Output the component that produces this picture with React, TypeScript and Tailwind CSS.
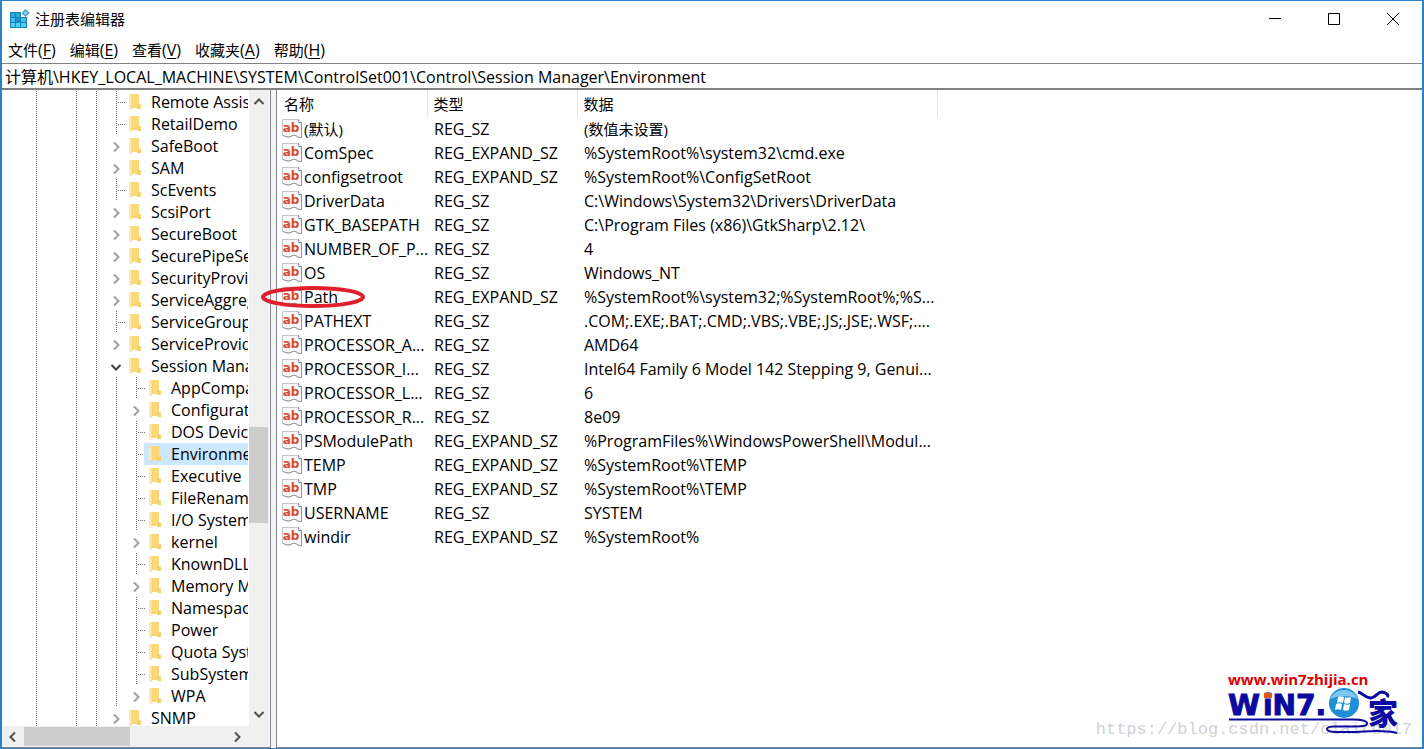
import React from "react";
import clsx from "clsx";

interface TreeNode {
  name: string;
  level: 1 | 2;
  state: "leaf" | "closed" | "open";
  selected?: boolean;
}

const TREE: TreeNode[] = [
  { name: "Remote Assistance", level: 1, state: "leaf" },
  { name: "RetailDemo", level: 1, state: "leaf" },
  { name: "SafeBoot", level: 1, state: "closed" },
  { name: "SAM", level: 1, state: "closed" },
  { name: "ScEvents", level: 1, state: "leaf" },
  { name: "ScsiPort", level: 1, state: "closed" },
  { name: "SecureBoot", level: 1, state: "closed" },
  { name: "SecurePipeServers", level: 1, state: "closed" },
  { name: "SecurityProviders", level: 1, state: "closed" },
  { name: "ServiceAggregatedEvents", level: 1, state: "closed" },
  { name: "ServiceGroupOrder", level: 1, state: "leaf" },
  { name: "ServiceProvider", level: 1, state: "closed" },
  { name: "Session Manager", level: 1, state: "open" },
  { name: "AppCompatCache", level: 2, state: "leaf" },
  { name: "Configuration Manager", level: 2, state: "closed" },
  { name: "DOS Devices", level: 2, state: "leaf" },
  { name: "Environment", level: 2, state: "leaf", selected: true },
  { name: "Executive", level: 2, state: "leaf" },
  { name: "FileRenameOperations", level: 2, state: "leaf" },
  { name: "I/O System", level: 2, state: "leaf" },
  { name: "kernel", level: 2, state: "closed" },
  { name: "KnownDLLs", level: 2, state: "leaf" },
  { name: "Memory Management", level: 2, state: "closed" },
  { name: "NamespaceSeparation", level: 2, state: "leaf" },
  { name: "Power", level: 2, state: "leaf" },
  { name: "Quota System", level: 2, state: "leaf" },
  { name: "SubSystems", level: 2, state: "leaf" },
  { name: "WPA", level: 2, state: "closed" },
  { name: "SNMP", level: 1, state: "closed" },
];

const VALUES = [
  ["(默认)", "REG_SZ", "(数值未设置)"],
  ["ComSpec", "REG_EXPAND_SZ", "%SystemRoot%\\system32\\cmd.exe"],
  ["configsetroot", "REG_EXPAND_SZ", "%SystemRoot%\\ConfigSetRoot"],
  ["DriverData", "REG_SZ", "C:\\Windows\\System32\\Drivers\\DriverData"],
  ["GTK_BASEPATH", "REG_SZ", "C:\\Program Files (x86)\\GtkSharp\\2.12\\"],
  ["NUMBER_OF_P...", "REG_SZ", "4"],
  ["OS", "REG_SZ", "Windows_NT"],
  ["Path", "REG_EXPAND_SZ", "%SystemRoot%\\system32;%SystemRoot%;%S..."],
  ["PATHEXT", "REG_SZ", ".COM;.EXE;.BAT;.CMD;.VBS;.VBE;.JS;.JSE;.WSF;...."],
  ["PROCESSOR_A...", "REG_SZ", "AMD64"],
  ["PROCESSOR_I...", "REG_SZ", "Intel64 Family 6 Model 142 Stepping 9, Genui..."],
  ["PROCESSOR_L...", "REG_SZ", "6"],
  ["PROCESSOR_R...", "REG_SZ", "8e09"],
  ["PSModulePath", "REG_EXPAND_SZ", "%ProgramFiles%\\WindowsPowerShell\\Modul..."],
  ["TEMP", "REG_EXPAND_SZ", "%SystemRoot%\\TEMP"],
  ["TMP", "REG_EXPAND_SZ", "%SystemRoot%\\TEMP"],
  ["USERNAME", "REG_SZ", "SYSTEM"],
  ["windir", "REG_EXPAND_SZ", "%SystemRoot%"],
];

const MENUS = [
  ["文件", "F"],
  ["编辑", "E"],
  ["查看", "V"],
  ["收藏夹", "A"],
  ["帮助", "H"],
];

const RegeditIcon = () => (
  <svg width="20" height="20" viewBox="0 0 20 20" aria-hidden="true">
    <path d="M0 3h11v5h6v11H0z" fill="#1583b4" />
    <path d="M1 4h4v4H1zM6 4h4v4H6z" fill="#2fa9da" />
    <path d="M1 9h4v4H1zM11 9h5v4h-5z" fill="#3fc0ea" />
    <path d="M6 9h4v4H6z" fill="#1d8fc4" />
    <path d="M1 14h4v4H1zM6 14h4v4H6zM11 14h5v4h-5z" fill="#4fd0f4" />
    <path d="M15.500 0l4 4-4 4-4-4z" fill="#4a9cc4" />
    <path d="M15.500 2l2 2-2 2-2-2z" fill="#8fd4f0" />
  </svg>
);

const FolderIcon = () => (
  <svg width="14" height="18" viewBox="0 0 14 18" className="shrink-0" aria-hidden="true">
    <path d="M2 1h9v14H2z" fill="#fbd978" />
    <path d="M9 11l4 .5V16H9z" fill="#f7d06c" />
    <path d="M1 1l3 2v13l-3-1z" fill="#fdeab0" />
    <path d="M4 3v13l-1.500.500L1 15" fill="none" stroke="#eccb70" strokeWidth="0.600" />
  </svg>
);

const StringIcon = () => (
  <svg width="20" height="20" viewBox="0 0 20 20" className="shrink-0" aria-hidden="true">
    <path
      d="M.5.500h16l3 3v15c-2 .5-3 0-5-1.500s-4-.5-6 .5-5 .5-8-1.500z"
      fill="#fafafa"
      stroke="#c4c8cc"
    />
    <path d="M19.500 3.500v15c-2 .5-3 0-5-1.500s-4-.5-6 .5-5 .5-8-1.500" fill="none" stroke="#8c949c" />
    <path d="M16.500.500v3h3" fill="none" stroke="#8c949c" />
    <text
      x="9"
      y="13"
      textAnchor="middle"
      fill="#e04a2c"
      className="font-['DejaVu_Sans',sans-serif] text-[12px] leading-none font-bold"
    >
      ab
    </text>
  </svg>
);

type Direction = "up" | "down" | "left" | "right";

const ARROWS: Record<Direction, string> = {
  up: "M1.500 8L6 3.500 10.500 8",
  down: "M1.500 4L6 8.500 10.500 4",
  left: "M8 1.500L3.500 6 8 10.500",
  right: "M4 1.500L8.500 6 4 10.500",
};

const Arrow = ({ direction, color = "#505050" }: { direction: Direction; color?: string }) => (
  <svg width="12" height="12" viewBox="0 0 12 12" className="shrink-0" aria-hidden="true">
    <path d={ARROWS[direction]} fill="none" stroke={color} strokeWidth="2" />
  </svg>
);

interface GuideProps {
  line?: boolean;
  branch?: boolean;
}

// dotted connector, one cell of the tree indent
const Guide: React.FC<GuideProps> = ({ line, branch }) => (
  <svg width="20" height="22" viewBox="0 0 20 22" className="shrink-0" aria-hidden="true">
    {line && <path d="M10.500 0v22" stroke="#6e6e6e" strokeDasharray="1 1" />}
    {branch && <path d="M12 11.500h7" stroke="#6e6e6e" strokeDasharray="1 1" />}
  </svg>
);

const Expander = ({ open }: { open: boolean }) => (
  <button
    type="button"
    aria-label={open ? "折叠" : "展开"}
    className="flex h-[22px] w-5 shrink-0 items-center justify-center pt-px"
  >
    <Arrow direction={open ? "down" : "right"} color={open ? "#404040" : "#a0a0a0"} />
  </button>
);

const TreeRow = ({ node }: { node: TreeNode }) => (
  <li className="flex h-[22px] items-center pl-6">
    <Guide line />
    <Guide />
    <Guide line />
    <Guide line />
    {node.level === 2 && <Guide line />}
    {node.state === "leaf" ? <Guide line branch /> : <Expander open={node.state === "open"} />}
    <span
      className={clsx(
        "-ml-[2px] flex h-full min-w-0 flex-1 items-center gap-[9px] overflow-hidden pl-1",
        node.selected && "bg-[#cce8ff]"
      )}
    >
      <FolderIcon />
      <span className="whitespace-nowrap">{node.name}</span>
    </span>
  </li>
);

const TreePanel = () => (
  <nav
    aria-label="注册表项"
    className="flex w-[269px] shrink-0 flex-col border-r border-b border-[#828790] pr-px"
  >
    <div className="flex min-h-0 flex-1">
      <ul className="min-w-0 flex-1 overflow-hidden pt-px">
        {TREE.map((node) => (
          <TreeRow key={node.name} node={node} />
        ))}
      </ul>
      <div className="ml-px flex w-5 flex-col items-center bg-[#f0f0f0] pr-px">
        <button type="button" aria-label="向上滚动" className="flex h-6 items-center">
          <Arrow direction="up" />
        </button>
        <div className="flex w-full flex-1 flex-col">
          <div className="flex-[313]" />
          <div className="h-24 bg-[#cdcdcd]" />
          <div className="flex-[179]" />
        </div>
        <button type="button" aria-label="向下滚动" className="flex h-6 items-center">
          <Arrow direction="down" />
        </button>
      </div>
    </div>
    <div className="flex h-[21px] items-center bg-[#f0f0f0]">
      <button type="button" aria-label="向左滚动" className="flex w-[22px] justify-center">
        <Arrow direction="left" />
      </button>
      <div className="h-[19px] w-[106px] bg-[#cdcdcd]" />
      <div className="flex-1" />
      <button type="button" aria-label="向右滚动" className="mr-5 flex w-6 justify-center">
        <Arrow direction="right" />
      </button>
    </div>
  </nav>
);

const ValueTable = () => (
  <table className="w-[661px] table-fixed border-collapse text-left">
    <thead>
      <tr className="h-[27px] text-[15px]">
        <th className="w-[150px] border-r border-[#e5e5e5] p-0 pl-[7px] font-normal">名称</th>
        <th className="w-[150px] border-r border-[#e5e5e5] p-0 pl-[6px] font-normal">类型</th>
        <th className="border-r border-[#e5e5e5] p-0 pl-[6px] font-normal">数据</th>
      </tr>
    </thead>
    <tbody>
      {VALUES.map(([name, type, data], index) => (
        <tr key={name} className="h-6 whitespace-nowrap">
          <td className="p-0 pl-[5px]">
            <span className="relative flex items-center gap-[2px]">
              <StringIcon />
              <span className={clsx(index === 0 && "text-[15px]")}>{name}</span>
              {name === "Path" && (
                <svg
                  width="104"
                  height="24"
                  viewBox="0 0 104 24"
                  className="absolute -left-[21px] z-10"
                  aria-hidden="true"
                >
                  <ellipse cx="52" cy="12" rx="50" ry="9" fill="none" stroke="#e0202c" strokeWidth="4" />
                </svg>
              )}
            </span>
          </td>
          <td className="p-0 pl-[7px]">{type}</td>
          <td className={clsx("p-0 pl-[7px]", index === 0 && "text-[15px]")}>{data}</td>
        </tr>
      ))}
    </tbody>
  </table>
);

const SiteLogo = () => (
  <svg width="180" height="66" viewBox="0 0 180 66" role="img" aria-label="www.win7zhijia.cn">
    <text x="4" y="16" fill="#e00000" className="font-['Open_Sans',sans-serif] text-[15px] font-bold">
      www.win7zhijia.cn
    </text>
    <g fill="#0a0aa0" stroke="#0a0aa0">
      <text x="4" y="46" className="font-['DejaVu_Sans',sans-serif] text-[29px] font-bold">
        W
      </text>
      <text x="39" y="46" className="font-['DejaVu_Sans',sans-serif] text-[28px] font-bold">
        iN7.
      </text>
    </g>
    <path d="M40 24h8v5h-8z" fill="#e0561c" />
    <path
      d="M5 50.500h124c6 0 14 1 14 4s-6 3-14 3c-12 0-26-1-26 2.500s10 3 24 3 30-3 46 1"
      fill="none"
      stroke="#0a0aa0"
      strokeWidth="2"
    />
    <circle cx="120" cy="34" r="15" fill="#1f8fd8" />
    <path d="M106 30a15 14 0 0 1 28 0c-9-4-19-4-28 0z" fill="#7cc8f2" />
    <path
      d="M114 28c2-1 4-1 6 0l-1 6c-2-1-4-1-6 0zM121 28c2 1 4 1 6 0l-1 6c-2 1-4 1-6 0zM112 35c2-1 4-1 6 0l-1 6c-2-1-4-1-6 0zM120 35c2 1 4 1 6 0l-1 6c-2 1-4 1-6 0z"
      fill="#fff"
    />
    <path
      d="M134 23c5 1 7 6 13 6 6-1 6-6 11-6 5 1 7 3 5 5"
      fill="none"
      stroke="#0a0aa0"
      strokeWidth="3"
    />
    <text
      x="144"
      y="55"
      fill="#0a0aa0"
      className="font-['Noto_Sans_CJK_SC',sans-serif] text-[30px] font-black"
    >
      家
    </text>
  </svg>
);

const App: React.FC = () => (
  <div className="flex h-screen flex-col overflow-hidden border-t border-r-2 border-b border-l-2 border-[#2f7fc4] bg-white font-['Open_Sans','Noto_Sans_CJK_SC',sans-serif] text-base leading-[22px] text-black">
    <header className="flex h-9 shrink-0 items-center">
      <div className="flex flex-1 items-center gap-[5px] pl-2">
        <RegeditIcon />
        <h1 className="text-[15px]">注册表编辑器</h1>
      </div>
      <div className="flex h-full items-center gap-[11px] pr-[5px]">
        <button type="button" aria-label="最小化" className="flex w-12 justify-center">
          <svg width="12" height="12" viewBox="0 0 12 12">
            <path d="M0 5.500h12" stroke="#000" />
          </svg>
        </button>
        <button type="button" aria-label="最大化" className="flex w-12 justify-center">
          <svg width="12" height="12" viewBox="0 0 12 12">
            <path d="M.5.500h11v11H.5z" fill="none" stroke="#000" />
          </svg>
        </button>
        <button type="button" aria-label="关闭" className="flex w-12 justify-center">
          <svg width="12" height="12" viewBox="0 0 12 12">
            <path d="M0 0l12 12M12 0L0 12" stroke="#000" />
          </svg>
        </button>
      </div>
    </header>

    <div className="flex h-[26px] shrink-0 items-center gap-[14px] pl-[6px] text-[15px]">
      {MENUS.map(([label, key]) => (
        <button key={key} type="button">
          {label}
          <span className="text-base">
            (<u className="underline-offset-2">{key}</u>)
          </span>
        </button>
      ))}
    </div>

    <input
      aria-label="地址"
      defaultValue="计算机\HKEY_LOCAL_MACHINE\SYSTEM\ControlSet001\Control\Session Manager\Environment"
      className="h-[27px] shrink-0 border-t border-b-2 border-[#828282] pb-px pl-[3px] outline-none"
    />

    <div className="flex min-h-0 flex-1">
      <TreePanel />
      <div className="w-[5px] shrink-0 bg-[#f4f4f4]" />
      <main className="relative min-w-0 flex-1 border-b border-l border-[#828790]">
        <ValueTable />
        <div className="absolute right-[10px] bottom-[6px] font-['Liberation_Mono',monospace] text-[17px] text-[#d2d2d2]">
          https://blog.csdn.net/claire017
        </div>
        <div className="absolute right-[18px] bottom-3">
          <SiteLogo />
        </div>
      </main>
    </div>
  </div>
);

export default App;
